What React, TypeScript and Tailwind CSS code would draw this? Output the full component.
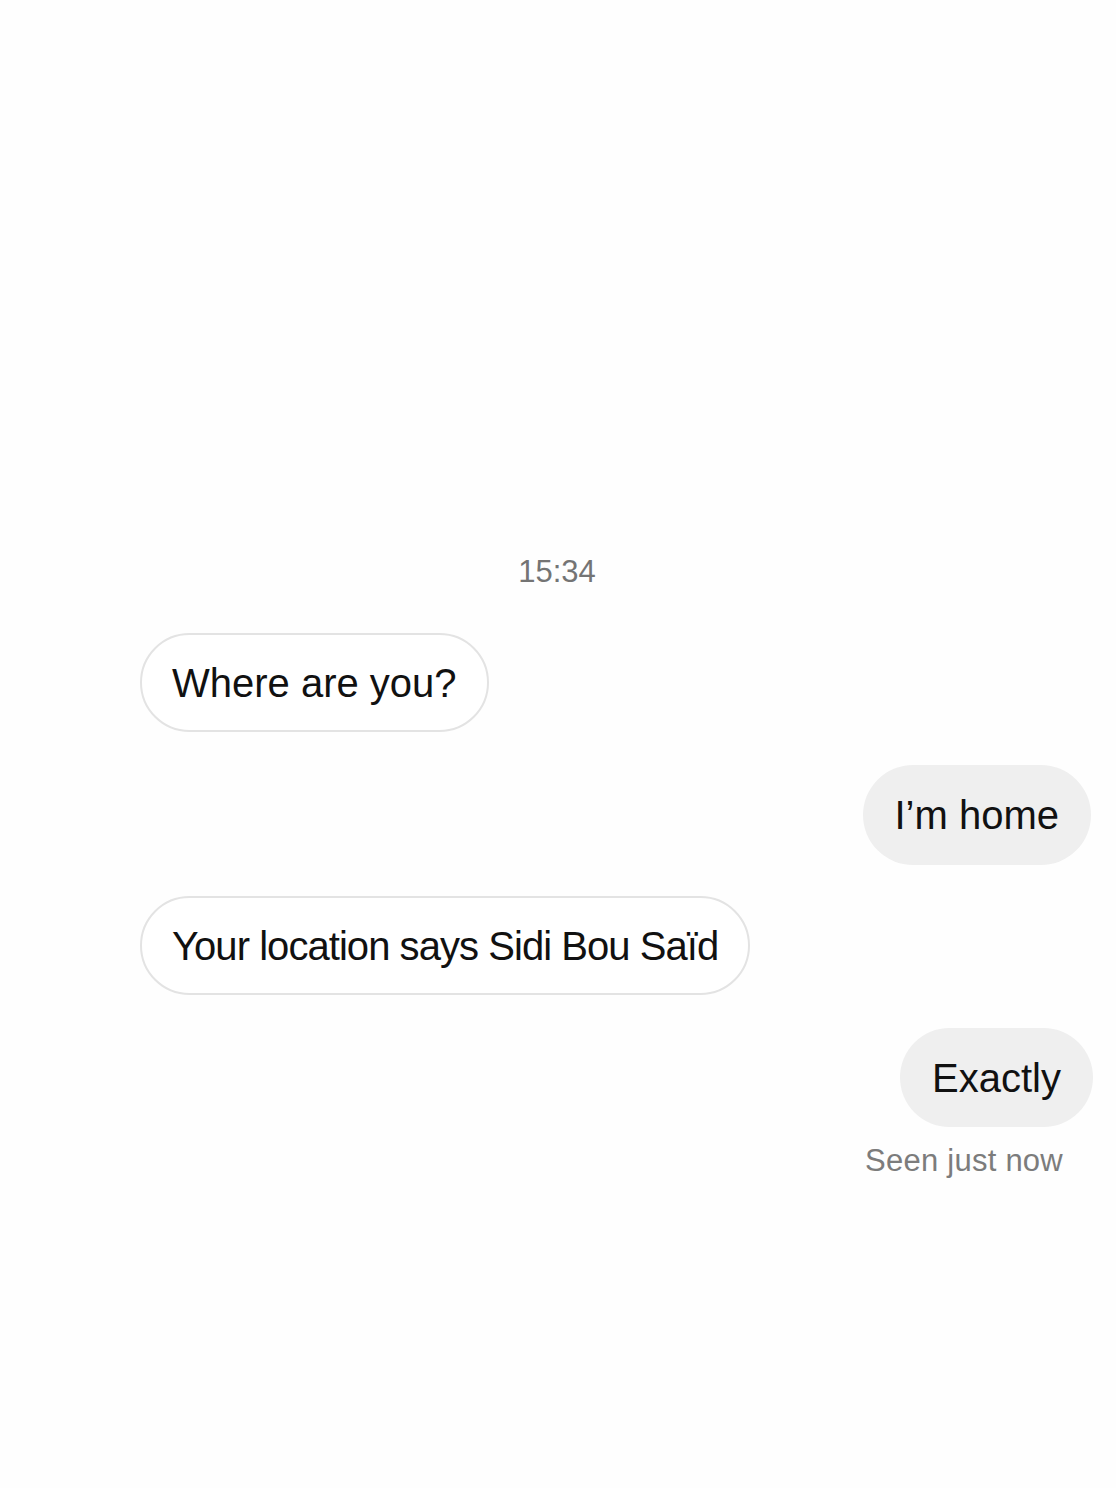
export default function App() {
  const font = { fontFamily: '"Liberation Sans", Arial, sans-serif' };
  return (
    <div
      className="w-full min-h-[1488px] bg-[#fefefe] flex flex-col text-[#111111]"
      style={font}
    >
      {/* conversation timestamp */}
      <div className="pt-[554px] h-[590px] box-border flex justify-center">
        <span className="text-[31px] leading-[36px] text-[#747474] ml-[-2px]">15:34</span>
      </div>

      {/* received */}
      <div className="mt-[43px] ml-[140px] self-start h-[99px] px-[30px] flex items-center rounded-full border-2 border-[#e3e3e3] bg-white text-[40px]">
        Where are you?
      </div>

      {/* sent */}
      <div className="mt-[33px] mr-[25px] self-end h-[100px] px-[32px] flex items-center rounded-full bg-[#efefef] text-[40px]">
        I’m home
      </div>

      {/* received */}
      <div className="mt-[31px] ml-[140px] self-start h-[99px] px-[30px] flex items-center rounded-full border-2 border-[#e3e3e3] bg-white text-[40px] tracking-[-0.95px]">
        Your location says Sidi Bou Saïd
      </div>

      {/* sent */}
      <div className="mt-[33px] mr-[23px] self-end h-[99px] px-[32px] flex items-center rounded-full bg-[#efefef] text-[40px]">
        Exactly
      </div>

      {/* read receipt */}
      <div className="mt-[17px] mr-[53px] self-end text-[31px] leading-[34px] tracking-[0.25px] text-[#7c7c7c]">
        Seen just now
      </div>
    </div>
  );
}
